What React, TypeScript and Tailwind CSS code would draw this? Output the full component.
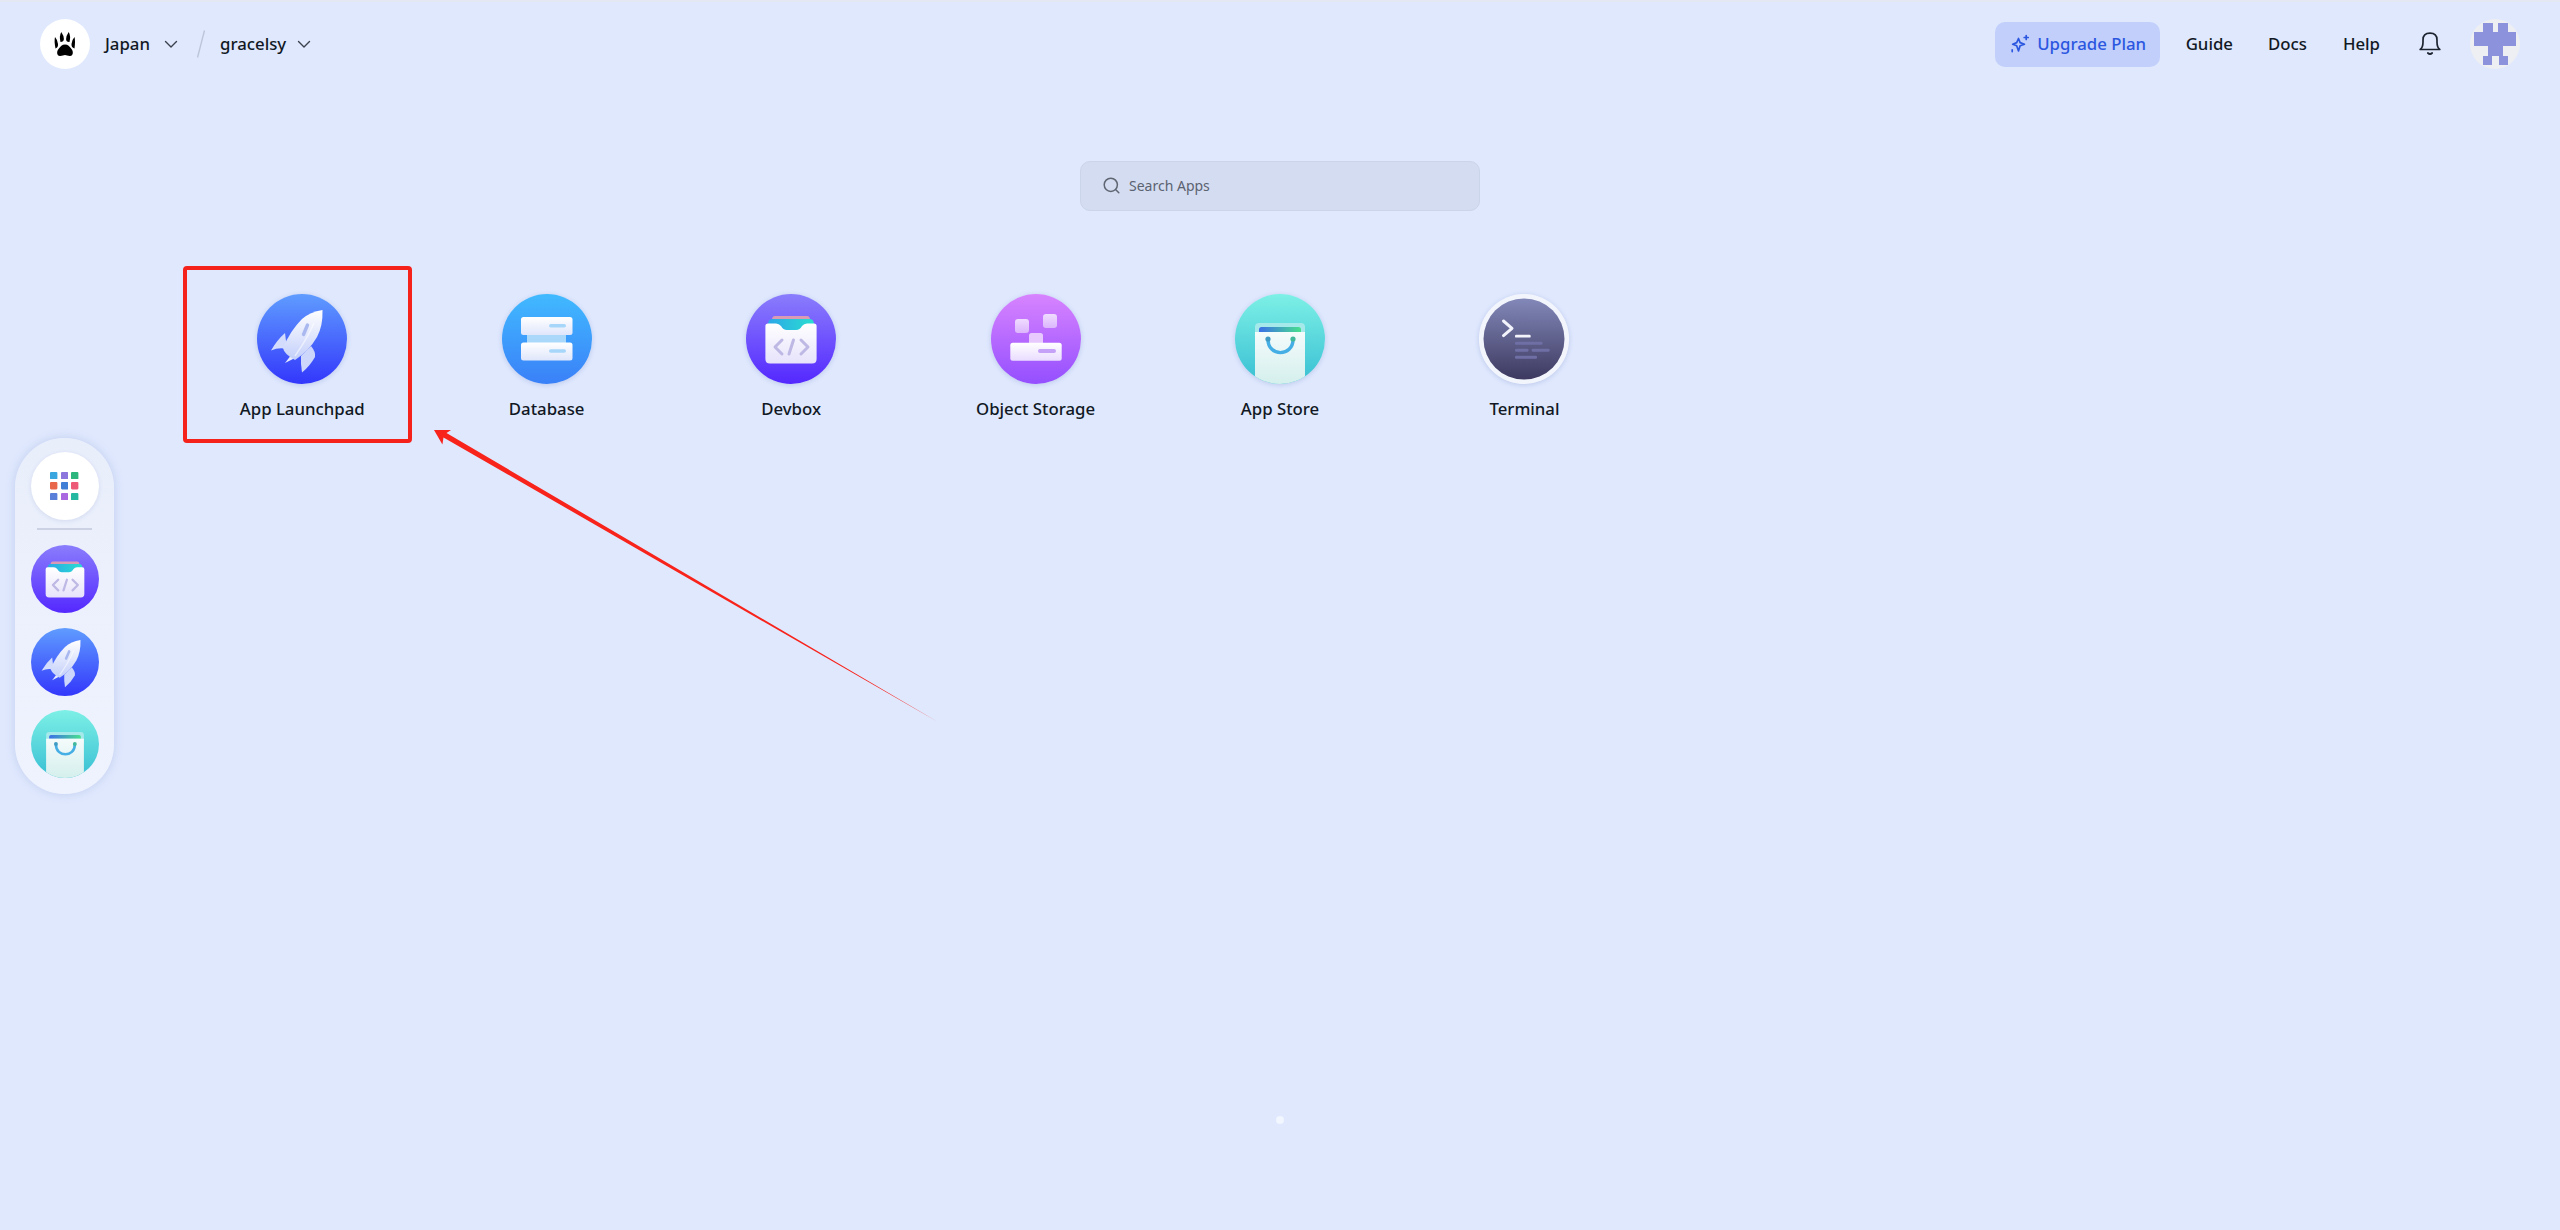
import React from "react";

const font = { fontFamily: '"Noto Sans", "Liberation Sans", sans-serif' };

function Defs() {
  const v = (id: string, a: string, b: string) => (
    <linearGradient id={id} x1="0" y1="0" x2="0" y2="1">
      <stop offset="0" stopColor={a} />
      <stop offset="1" stopColor={b} />
    </linearGradient>
  );
  return (
    <svg className="absolute h-0 w-0" aria-hidden="true">
      <defs>
        {v("g-rocket", "#5f9cff", "#3337fb")}
        {v("g-db", "#41baff", "#3a80f8")}
        {v("g-dev", "#8a7dfc", "#5428ff")}
        {v("g-obj", "#d884ff", "#944fff")}
        {v("g-store", "#7df0e6", "#38bfd3")}
        {v("g-term", "#8288b8", "#3d3960")}
        {v("g-white", "#ffffff", "#dfe6fb")}
        {v("g-rk", "#ffffff", "#c3cffa")}
        {v("g-pur", "#ffffff", "#e9dcff")}
        {v("g-sq", "#efdcff", "#dcb6fd")}
        {v("g-bag", "#f4fbfb", "#d3efec")}
        {v("g-card", "#ffffff", "#e7e2fb")}
        <linearGradient id="g-strip" x1="0" y1="0" x2="1" y2="0">
          <stop offset="0" stopColor="#3b6fe8" />
          <stop offset="1" stopColor="#49e08e" />
        </linearGradient>
        <linearGradient id="g-layer" x1="0" y1="0" x2="1" y2="0">
          <stop offset="0" stopColor="#2ba7e8" />
          <stop offset="1" stopColor="#2adfd0" />
        </linearGradient>
        <clipPath id="c-disc">
          <circle cx="45" cy="45" r="45" />
        </clipPath>
      </defs>
    </svg>
  );
}

function RocketIcon({ size }: { size: number }) {
  return (
    <svg width={size} height={size} viewBox="0 0 90 90">
      <circle cx="45" cy="45" r="45" fill="url(#g-rocket)" />
      <path d="M28 39 Q20 46 14 56.5 Q22 53 30 55Z" fill="#d3dcfc" />
      <path d="M54 52 Q59 58 58 63 Q53 72 45 78.5 Q43.5 70 44 62Z" fill="#ccd7fb" />
      <path d="M38 56 L28 69 L42 62Z" fill="#e6ebfe" />
      <path d="M65.5 16 Q53 18 45 25 Q33 37 26 54 Q27 60 38 66 Q52 57 60 43 Q66 32 65.5 16Z" fill="url(#g-rk)" />
      <path d="M38 62 Q50 45 57 29" stroke="#ffffff" strokeOpacity="0.55" strokeWidth="1.5" fill="none" />
      <path d="M50.5 31 L46.5 40.5" stroke="#a9b8ef" strokeWidth="3.4" strokeLinecap="round" />
    </svg>
  );
}

function DatabaseIcon({ size }: { size: number }) {
  return (
    <svg width={size} height={size} viewBox="0 0 90 90">
      <circle cx="45" cy="45" r="45" fill="url(#g-db)" />
      <rect x="25" y="40" width="39" height="9" fill="#a9d8fb" />
      <rect x="19" y="23" width="51.5" height="18" rx="2.5" fill="url(#g-white)" />
      <rect x="19" y="48.5" width="51.5" height="18" rx="2.5" fill="url(#g-white)" />
      <rect x="47" y="30" width="17" height="3.6" rx="1.8" fill="#a6d6fa" />
      <rect x="47" y="55.2" width="17" height="3.6" rx="1.8" fill="#a6d6fa" />
    </svg>
  );
}

function DevboxIcon({ size }: { size: number }) {
  return (
    <svg width={size} height={size} viewBox="0 0 90 90">
      <circle cx="45" cy="45" r="45" fill="url(#g-dev)" />
      <path d="M26 26 Q26 22 29 22 H61 Q64 22 64 26 V32 H26Z" fill="#d99ab5" />
      <path d="M22 31 Q22 25 26 25 H64 Q68 25 68 31 V40 H22Z" fill="url(#g-layer)" />
      <path d="M22 29.5 H30 Q33 29.5 35 32 Q37 36 41 36 H50 Q54 36 56 32 Q58 29.5 61 29.5 H68 Q70.6 29.5 70.6 32 V65 Q70.6 69.5 66 69.5 H24 Q19.4 69.5 19.4 65 V32 Q19.4 29.5 22 29.5Z" fill="url(#g-card)" />
      <g stroke="#bdb8e4" strokeWidth="3" strokeLinecap="round" strokeLinejoin="round" fill="none">
        <path d="M36 46 L29 53 L36 60" />
        <path d="M47.5 46 L43 60" />
        <path d="M55 46 L62 53 L55 60" />
      </g>
    </svg>
  );
}

function ObjectIcon({ size }: { size: number }) {
  return (
    <svg width={size} height={size} viewBox="0 0 90 90">
      <circle cx="45" cy="45" r="45" fill="url(#g-obj)" />
      <rect x="24" y="25" width="14" height="14" rx="3" fill="url(#g-sq)" />
      <rect x="52" y="20" width="14" height="14" rx="3" fill="url(#g-sq)" />
      <rect x="38" y="39" width="14" height="12" rx="2.5" fill="#e7c9fe" />
      <rect x="19.3" y="48.7" width="51.4" height="18" rx="2.5" fill="url(#g-pur)" />
      <rect x="47" y="55" width="18" height="4" rx="2" fill="#c5a1f8" />
    </svg>
  );
}

function StoreIcon({ size }: { size: number }) {
  return (
    <svg width={size} height={size} viewBox="0 0 90 90">
      <circle cx="45" cy="45" r="45" fill="url(#g-store)" />
      <g clipPath="url(#c-disc)">
        <path d="M20 33 Q20 29 24 29 H66 Q70 29 70 33 V45 H20Z" fill="#a5e9ea" />
        <path d="M24 38 V35.5 Q24 33 26.5 33 H63.5 Q66 33 66 35.5 V38Z" fill="url(#g-strip)" />
        <rect x="20" y="38" width="50" height="54" fill="url(#g-bag)" />
      </g>
      <path d="M33 45.5 C33 63 58 63 58 45.5" stroke="#45aee4" strokeWidth="3.4" fill="none" strokeLinecap="round" />
      <circle cx="33" cy="45" r="2.6" fill="#3f9bc4" />
      <circle cx="58" cy="45" r="2.6" fill="#42b99b" />
    </svg>
  );
}

function TerminalIcon({ size }: { size: number }) {
  return (
    <svg width={size} height={size} viewBox="0 0 90 90">
      <circle cx="45" cy="45" r="45" fill="#f3f5fd" />
      <circle cx="45" cy="45" r="40.5" fill="url(#g-term)" />
      <path d="M24.5 27 L33 34.3 L24.5 41.6" stroke="#f2f3fb" strokeWidth="3" fill="none" strokeLinecap="round" strokeLinejoin="round" />
      <rect x="36" y="40.8" width="15.7" height="2.8" rx="1.2" fill="#f2f3fb" />
      <g fill="#6f6fa6">
        <rect x="36" y="47.8" width="27.5" height="3" rx="1.2" />
        <rect x="36" y="54.8" width="13.5" height="3" rx="1.2" />
        <rect x="52.6" y="54.8" width="18" height="3" rx="1.2" />
        <rect x="36" y="61.8" width="22" height="3" rx="1.2" />
      </g>
    </svg>
  );
}

function GridIcon() {
  const colors = ["#39a6e0", "#8c76dd", "#2cb67d", "#e8664a", "#3f7fd6", "#ec5a78", "#5a7fd8", "#a968e0", "#25b8a0"];
  return (
    <div className="flex h-[68px] w-[68px] items-center justify-center rounded-full bg-white shadow-[0_1px_4px_rgba(100,120,180,0.18)]">
      <div className="grid grid-cols-3 gap-[3.3px]">
        {colors.map((c) => (
          <svg key={c} width="7.4" height="7.4" viewBox="0 0 8 8">
            <rect width="8" height="8" rx="1.2" fill={c} />
          </svg>
        ))}
      </div>
    </div>
  );
}

function Chevron() {
  return (
    <svg width="14" height="14" viewBox="0 0 14 14" fill="none">
      <path d="M1.5 4.5 L7 10 L12.5 4.5" stroke="#3a414d" strokeWidth="1.4" strokeLinecap="round" strokeLinejoin="round" />
    </svg>
  );
}

function Paw() {
  return (
    <svg width="50" height="50" viewBox="0 0 50 50">
      <circle cx="25" cy="25" r="25" fill="#ffffff" />
      <g fill="#000000">
        <path d="M15.5 29.5 Q14 22 15 18 Q17.7 21 18 25 Q18.3 28.5 15.5 29.5Z" />
        <path d="M20.5 23 Q19 17 21.3 13 Q24 17 23.9 20 Q23.7 23 20.5 23Z" />
        <path d="M29 23 Q26 23 26.1 20 Q26 17 28.7 13 Q31 17 29.5 23Z" />
        <path d="M34.5 29.5 Q31.2 28.5 31.5 25 Q31.8 21 34.5 18 Q35.5 22 34.5 29.5Z" />
        <path d="M25 25.5 C28 25.5 29.5 27.5 31.5 30 C33.5 32.5 33.5 36.8 30 37 C27.5 37 26.5 36 25 36 C23.5 36 22.5 37 20 37 C16.5 36.8 16.5 32.5 18.5 30 C20.5 27.5 22 25.5 25 25.5Z" />
      </g>
    </svg>
  );
}

function Sparkle() {
  return (
    <svg width="20" height="20" viewBox="0 0 20 20" fill="none" stroke="#2b57e0" strokeWidth="1.7" strokeLinejoin="round" strokeLinecap="round">
      <path d="M8.5 4.5 L10.1 8.6 L14.5 10.2 L10.1 11.8 L8.5 17 L6.7 11.8 L2.7 10.2 L6.7 8.6Z" />
      <path d="M16.2 1.5 V5.5 M14.2 3.5 H18.2" />
      <path d="M2.2 15.8 V17.6" />
    </svg>
  );
}

function Bell() {
  return (
    <svg width="22" height="24" viewBox="0 0 22 24" fill="none" stroke="#1d2430" strokeWidth="1.7" strokeLinejoin="round" strokeLinecap="round">
      <path d="M1.2 17.5 Q4 15.5 4 10 V8 Q4 1.2 11 1.2 Q18 1.2 18 8 V10 Q18 15.5 20.8 17.5Z" />
      <path d="M8.8 21 Q11 23 13.2 21" />
    </svg>
  );
}

function Avatar() {
  return (
    <div className="flex h-[50px] w-[50px] items-center justify-center rounded-full bg-[#eeeff3]">
      <svg width="42" height="42" viewBox="0 0 42 42" shapeRendering="crispEdges" fill="#8c93dc">
        <rect x="9" y="0" width="10" height="9" />
        <rect x="24" y="0" width="10" height="9" />
        <rect x="0" y="9" width="42" height="14" />
        <rect x="14" y="23" width="15" height="10" />
        <rect x="9" y="33" width="9" height="9" />
        <rect x="25" y="33" width="9" height="9" />
      </svg>
    </div>
  );
}

const apps = [
  { name: "App Launchpad", Icon: RocketIcon },
  { name: "Database", Icon: DatabaseIcon },
  { name: "Devbox", Icon: DevboxIcon },
  { name: "Object Storage", Icon: ObjectIcon },
  { name: "App Store", Icon: StoreIcon },
  { name: "Terminal", Icon: TerminalIcon },
];

export default function App() {
  return (
    <div className="relative flex h-[1230px] w-full flex-col overflow-hidden bg-[#dfe8fd] text-[#111824]" style={font}>
      <Defs />
      <header className="flex h-[86px] items-center justify-between border-t-2 border-[#e3e8f3] pl-[40px] pr-[40px] text-[16.8px]">
        <div className="flex items-center">
          <Paw />
          <span className="ml-[15px] font-medium">Japan</span>
          <span className="ml-[14px]"><Chevron /></span>
          <svg className="ml-[19px]" width="8" height="28" viewBox="0 0 8 28">
            <path d="M7.5 0.5 L0.5 27.5" stroke="#bcc5d8" strokeWidth="1.4" />
          </svg>
          <span className="ml-[15px] font-medium">gracelsy</span>
          <span className="ml-[11px]"><Chevron /></span>
        </div>
        <div className="flex items-center">
          <button className="flex h-[45px] w-[165px] items-center justify-center gap-[7px] rounded-[10px] bg-[#c2cffb] pl-[2px] font-medium text-[#2b57e0]">
            <Sparkle />
            Upgrade Plan
          </button>
          <span className="ml-[26px] font-medium">Guide</span>
          <span className="ml-[35px] font-medium">Docs</span>
          <span className="ml-[36px] font-medium">Help</span>
          <span className="ml-[39px] flex"><Bell /></span>
          <span className="ml-[29px] flex"><Avatar /></span>
        </div>
      </header>

      <div className="mt-[75px] flex justify-center">
        <div className="flex h-[50px] w-[400px] items-center rounded-[10px] border border-[#cbd5ea] bg-[#d3dcf1] pb-[1px] pl-[22px] text-[14px] text-[#5b6270]">
          <svg width="17" height="17" viewBox="0 0 17 17" fill="none" stroke="#5f6672" strokeWidth="1.5" strokeLinecap="round">
            <circle cx="7.8" cy="7.8" r="6.6" />
            <path d="M12.8 12.8 L15.8 15.8" />
          </svg>
          <span className="ml-[9px]">Search Apps</span>
        </div>
      </div>

      <div className="mt-[83px] grid grid-cols-9 px-[180px]">
        {apps.map(({ name, Icon }) => (
          <div key={name} className="flex flex-col items-center">
            <div className="flex rounded-full shadow-[0_1px_5px_rgba(70,90,170,0.22)]">
              <Icon size={90} />
            </div>
            <span className="mt-[13px] text-[16.8px] font-medium leading-[24px]">{name}</span>
          </div>
        ))}
      </div>

      <div className="mx-auto mb-[106px] mt-auto h-[8px] w-[8px] rounded-full bg-[#f1f6ff]" />

      <aside className="absolute left-[15px] top-[438px] flex h-[356px] w-[99px] flex-col items-center rounded-[50px] bg-gradient-to-b from-[#e9eefb] to-[#eff3fe] pt-[14px] shadow-[0_0_10px_rgba(120,140,200,0.28)]">
        <GridIcon />
        <div className="mt-[8px] h-[2px] w-[55px] bg-[#ccd2e4]" />
        <div className="mt-[15px] flex rounded-full"><DevboxIcon size={68} /></div>
        <div className="mt-[15px] flex rounded-full"><RocketIcon size={68} /></div>
        <div className="mt-[14px] flex rounded-full"><StoreIcon size={68} /></div>
      </aside>

      <div className="absolute left-[183px] top-[266px] h-[177px] w-[229px] rounded-[4px] border-[4px] border-[#f5211b]" />

      <svg className="absolute left-[420px] top-[420px]" width="530" height="310" viewBox="420 420 530 310">
        <path d="M434 430 L451 430 L446.5 433 L938 722 L443.5 437.5 L442.4 444.5Z" fill="#f8231b" />
      </svg>
    </div>
  );
}
